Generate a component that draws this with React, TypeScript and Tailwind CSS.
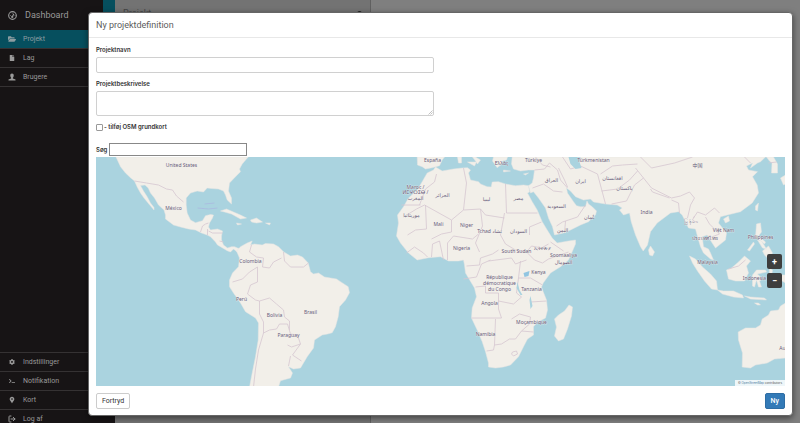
import React from "react";
import { FaFolderOpen, FaFile, FaCog, FaTerminal } from "react-icons/fa";
import { MdLocationPin } from "react-icons/md";
import { FiLogOut } from "react-icons/fi";

type NavItem = { label: string; icon: React.ReactNode; active?: boolean };

const topItems: NavItem[] = [
  { label: "Projekt", icon: <FaFolderOpen />, active: true },
  { label: "Lag", icon: <FaFile className="p-px" /> },
  {
    label: "Brugere",
    icon: (
      <svg viewBox="0 0 16 16" className="h-[8px] w-[8px]" fill="currentColor">
        <path d="M8 1C10.500 1 11.500 2.800 11.500 5C11.500 7 10.800 8.500 9.800 9.500L9.800 11L15 13V15H1V13L6.200 11L6.200 9.500C5.200 8.500 4.500 7 4.500 5C4.500 2.800 5.500 1 8 1Z" />
      </svg>
    ),
  },
];

const bottomItems: NavItem[] = [
  { label: "Indstillinger", icon: <FaCog className="p-px" /> },
  { label: "Notifikation", icon: <FaTerminal className="p-px" /> },
  { label: "Kort", icon: <MdLocationPin /> },
  {
    label: "Log af",
    icon: <FiLogOut className="stroke-3" />,
  },
];

function NavRow({ label, icon, active }: NavItem) {
  return (
    <li className="border-b border-[#353233]">
      <a
        href="#"
        className={
          active
            ? "flex h-[18px] items-center gap-[7px] bg-[#064f5e] pl-2 text-[#8c9da1]"
            : "flex h-[18px] items-center gap-[7px] pl-2 text-[#9a9a9a]"
        }
      >
        <span className="flex w-2 justify-center text-[8px]">{icon}</span>
        <span>{label}</span>
      </a>
    </li>
  );
}

const northAmerica =
  "M115.500 157L120 166.700 125 173 130 177.700 134 181 136.700 187 140 193 143.500 198 148 203.500 153.500 210 153.500 207.500 150 203 146.700 196.700 143 191 140 185.500 144.500 185 147.700 188 150 193 154 198 158 205 163.500 210 165 215 165 219 173 225 180 227 188 229 195 230 201 233 206.700 235 210 236.700 215 242 217 245 220 246.700 226.700 250.700 230 252 233 249 236.700 252 240 255 241 249 237 248 234 246.700 231 246.700 227 248 223 245 221 240 221 236 222 231 217 229 210 230 208 227 209 223 212 218 213 215 210 214.500 205 215.700 202 220.700 195 222.700 190 220 186.700 213 185.700 205 185.700 198 190 193 196.700 191 203 192 206.700 188 211 188.500 218 189 223 191 225 195 226.700 200 231 204 231 198 228 191 229 183 235 176.700 240 171.700 239 169 241.700 164 247.700 157Z";
const southAmerica =
  "M236 251L240 246.700 246.700 243 251.700 241 250 245 254 244 261.700 245 265 243.500 273 244 278 246.700 283 251.700 290 256 297 255 302 257 307.700 263 310 271.700 313 274 318 273 324 277 330 278 336 279 340 281.700 347.700 286.700 349 292.700 345 300 339 306.700 337.700 316.700 335 326.700 331.700 332.700 327 334 321.700 335 314 340 313 348 306.700 356.700 300 368 293 369 288 366.700 292 373 290 378 280 380.700 278 387 249 387 251.700 373 255 356.700 257.700 340 258 323 255 318 245 311.700 240 303 233 293 229 286.700 229 280 232 273 238 266.700 239 258Z";
const africa =
  "M436.700 168L441.700 171 453 169 461.700 168 467 167.700 470 170 468 173 470 180 478 181.700 480 184 486.700 186.700 490.700 187 491.700 182 498 181.700 505 184 515 185.700 523 185 528 185.700 529 192 527 193 531.700 201.700 536.700 210 541.700 221.700 546.700 230 551.700 238 556.700 243 568 241 575 240 575 244 571.700 251.700 568 260 560 266.700 550 273 542.700 283 541 287 542.700 291.700 546 300 547 310 545 318 537 322 533 326.700 533 335 527 339 523 346.700 518 356.700 510 365 503 367 495 368 488 367 488 363 485 351.700 481.700 341.700 476.700 330 471 318 471.700 308 476 296.700 474 288 468 278 465 273 464 265 463 260 458 261 448 261 440 256.700 428 257.700 416.700 260 408 253 400 243 396 236 398 223 397 215 403 206.700 408 198 416.700 190 421.700 181.700 426.700 173 433 170 435 167Z";
const eurasia =
  "M511.700 157L511 164 513 169 520 171 528 170 534 170 533 177.700 531.700 183 528 185.700 530 193 533 191.700 538 198 545 208 548 218 552 226.700 554 235 563 233 570 230 580 225 588 221.700 595 215 596 211 591.700 206.700 588 204 586.500 201 585 206.700 580 206.700 576 205.700 573 201.700 567 193 566 188 570 191 575 196.700 583 200 590 199 593 202 605 204 616.700 205 621.700 208 619 210 623 215 629 213 630.700 221.700 635 235 640 246.700 642.700 251 647 245 650 231.700 656.700 223 665 216.700 670 213 678 211.700 681.700 215 685 221.700 688 228 695 229 698 240 700 246.700 703 253 710 259 713 260 710 253 708 249 703 246.700 701.700 236.700 706.700 235 711.700 243 715 248 725 240 726 233 718 223 720 216.700 726.700 215 740 211.700 751.700 203 758 193 756.700 185 752 176.700 757 171.700 748 170 746 166 752 163 750 168 757 163 760 161.700 765 157Z";
const islands = [
  "M416.700 157L417 165 421.700 166.700 425 169 431.700 167.700 439 165.700 441.700 160 444 157Z",
  "M493 157L492 161 496.700 167.700 500 165 502 161 506 160 507 157Z",
  "M475 157L480 160 477 164 475 161 472 157Z",
  "M467 162L476 162 474 166Z",
  "M457 157L461 157 461 163 458 163Z",
  "M503 170L510 171 503 172Z",
  "M523 174L528 173 525 175Z",
  "M766 157L769 161 771.500 163 771 173 777 173 777 164 773 157Z",
  "M780 178L785 175 785 184 783 185Z",
  "M220 211L226 209 233 212 240 215 246 218 240 219 231 214 224 212Z",
  "M250 220L256 218 262 222 256 223 251 222Z",
  "M236 223L241 224 237 225Z",
  "M265 223L270 223 269 225Z",
  "M568.500 305L572 307 571 316 567 329 563 339 558 341 554 336 556 327 554 319 558 315 564 311Z",
  "M650 246L654 252 652 256 649 255 648 250Z",
  "M755 206L758 203 757 211 755 210Z",
  "M723 219L728 216 729 221 725 223Z",
  "M689 256L695 259 702 267 710 274 716 281 717 290 711 289 704 281 697 271 692 263Z",
  "M717 290L723 291 733 291 742 295 743 298 733 297 722 294Z",
  "M744 296L750 297 764 298 766 300 750 299Z",
  "M754 303L758 303 760 305 757 305Z",
  "M726 270L731 268 738 262 744 256 750 261 746 266 748 273 744 281 735 281 728 279Z",
  "M756 224L760 223 761 232 758 236 765 242 764 244 755 237Z",
  "M762 251L768 246 772 253 768 259 764 255Z",
  "M747 250L753 242 754 244 749 251Z",
  "M757 240L761 241 766 249 762 248Z",
  "M752 275L756 270 765 270 766 272 757 274 762 279 759 281 761 287 758 287 756 280 754 287 752 286Z",
  "M769 268L772 270 771 277 769 273Z",
  "M776 275L785 275 785 283 780 280Z",
  "M785 303L780 306 778 310 770 311 768 315 761.700 319 760 325 755 328 745 328 737.700 332 738 340 742 353 741.700 367 750 368 755 365 766.700 363 774 359 785 358Z",
];
const borders =
  "M134 181L146 183 158 185 166 189 172 190 176 196 183 202M200 232L202 226 205 224 208 223M208 231L212 233 222 233M207 229L207 235M219 241L223 242M251 245L249 252 256 257 263 258 262 267M262 267L269 268 273 262 281 258M283 252L284 261 290 267 303 267 308 263M257 267L257 282 250 285 247 294 255 300 259 301M232 282L242 279 249 272 257 267M259 301L269 298 276 304 283 310 284 317 289 321 289 330M259 301L259 314 263 322 263 333 258 350 255 369 253 387M263 333L269 330 276 329 279 324 287 324 290 334 297 335 300 344 291 347 287 345M300 344L292 355 301 361M290 356L288 366M401 205L420 205M403 217L416 209 424 205 451 220 463 210 466 183 463 168M425 205L426 229 415 230 407 235M436 174L434 182 425 189 419 205M451 220L451 232 441 234 431 239M480 209L485 215 504 218M463 210L480 209 482 226 475 243 479 252M505 184L506 213 537 213M504 213L500 235 505 244 515 250 526 252M447 260L447 243 453 236 472 239 478 234M406 253L414 247 423 253 427 257M431 257L432 244 439 241 443 260M466 266L479 265 480 258 492 254 498 250M488 261L511 258 515 264 526 260M463 279L476 277 481 264 490 260M475 287L485 286 485 293 498 293 498 309 501 318 471 318M498 301L513 304 521 297 516 293 518 278 520 261M526 252L534 260 542 263 548 259 568 252M518 278L530 278 542 285M530 302L546 301M495 319L494 345 501 344 509 339 515 339 521 331 533 332M494 345L493 350 486 351M511 319L519 314 530 317 529 324 521 331M512 352L516 351 517 354 513 356 511 354ZM534 170L544 169 549 163 557 170 560 180 567 188M532 188L543 184 553 191 562 192M529 235L529 227 541 222M526 252L531 246 541 248 548 244M550 242L563 251M556 226L562 222 577 217 585 205M558 168L564 180 567 187M562 157L570 169 580 166 597 174 601 189 605 204M600 174L612 166 622 165 637 164M601 191L617 189 629 180 637 171M611 204L626 201 634 185 643 178 635 168M640 157L651 168 674 163 692 157M643 178L651 188 671 198 680 196 689 192 694 198 690 205 687 218M671 200L678 203 679 213M693 218L697 212 705 215 714 208 719 213M694 216L692 220 695 222M705 217L709 224 719 234 711 237M650 189L652 192 669 198M728 269L738 266 745 260M744 157L750 163M768 163L776 162M565 221L564 233M535 157L542 165 550 167";

type MapLabel = [number, number, string];
const labels: MapLabel[] = [
  [181, 167, "United States"], [173, 210, "México"], [250, 263, "Colombia"], [241, 301, "Perú"],
  [274, 317, "Bolivia"], [310, 314, "Brasil"], [288, 337, "Paraguay"],
  [432, 162, "España"], [501, 165, "Ελλάς"], [533, 162, "Türkiye"], [593, 162, "Türkmenistan"],
  [415, 189, "Maroc /"], [415, 194, "ⵍⵎⵖⵔⵉⴱ /"], [415, 200, "المغرب"], [442, 197, "الجزائر"],
  [486, 201, "ليبيا"], [518, 200, "مصر"], [551, 182, "العراق"], [556, 208, "السعودية"],
  [562, 232, "اليمن"], [580, 183, "ایران"], [612, 180, "افغانستان"], [624, 190, "پاکستان"], [589, 219, "عُمان"],
  [411, 217, "موريتانيا"], [438, 226, "Mali"], [466, 227, "Niger"], [489, 233, "Tchad تشاد"],
  [518, 233, "السودان"], [461, 250, "Nigeria"], [516, 253, "South Sudan"], [542, 250, "ኢትዮጵያ"],
  [563, 257, "Soomaaliya"], [563, 264, "الصومال"], [538, 274, "Kenya"], [499, 279, "République"],
  [499, 285, "démocratique"], [499, 291, "du Congo"], [531, 291, "Tanzania"], [489, 305, "Angola"],
  [531, 324, "Moçambique"], [485, 336, "Namibia"], [646, 214, "India"], [697, 167, "中国"],
  [690, 223, "မြန်မာ"], [723, 232, "Việt Nam"], [704, 240, "ประเทศไทย"], [707, 264, "Malaysia"],
  [760, 239, "Philippines"], [754, 280, "Indonesia"], [782, 350, "Au"],
];

function WorldMap() {
  return (
    <svg
      viewBox="95 157 690 229"
      preserveAspectRatio="xMidYMid slice"
      className="block h-[229px] w-full bg-[#aad3df]"
      role="img"
      aria-label="Kort"
    >
      <g fill="#f2efe9" stroke="#e6e4e2" strokeWidth="0.5" strokeLinejoin="round">
        <path d={northAmerica} />
        <path d={southAmerica} />
        <path d={africa} />
        <path d={eurasia} />
        {islands.map((d) => (
          <path key={d} d={d} />
        ))}
      </g>
      <path d={borders} fill="none" stroke="#d6c6d0" strokeWidth="0.8" strokeLinejoin="round" />
      <g fill="#aad3df">
        <path d="M568 157L580 157 579 162 581 168 575 169 570 164Z" />
        <path d="M523 273L529 271 528 276 524 277Z" fill="#91c5e1" />
        <path d="M517 282L519 290 522 295 520 295 516 288ZM530 296L532 306 530 309 529 300Z" />
      </g>
      <path d="M204 204L214 203M197 208L208 209 217 208" stroke="#a9b9df" strokeWidth="0.8" fill="none" />
      <g
        className="font-['Noto_Sans','DejaVu_Sans','Noto_Sans_CJK_SC',sans-serif] text-[5px]"
        fill="#665a78"
        stroke="#f5f3ef"
        strokeWidth="0.4"
        paintOrder="stroke"
        textAnchor="middle"
      >
        {labels.map(([x, y, text]) => (
          <text key={text} x={x} y={y}>
            {text}
          </text>
        ))}
      </g>
    </svg>
  );
}

const fieldLabel = "font-['Inter','Liberation_Sans',sans-serif] text-[6px] leading-[8px] font-semibold";
const zoomButton = "flex h-[15px] w-[15px] items-center justify-center rounded-[2px] bg-[#3e3e3e]";

export default function App() {
  return (
    <div className="relative flex h-screen overflow-hidden bg-[#7f7f7f] font-['Roboto','Liberation_Sans',sans-serif] text-[7px] leading-[8px] text-[#333]">
      <aside className="flex w-[115px] shrink-0 flex-col overflow-hidden bg-[#171415]">
        <div className="flex h-[30px] shrink-0">
          <div className="flex grow items-center gap-2 pl-2 text-[9px] text-[#999]">
            <svg viewBox="0 0 16 16" className="h-[9px] w-[9px]" fill="none" stroke="currentColor" strokeWidth="2">
              <circle cx="8" cy="8" r="6.800" />
              <path d="M7.500 10.500L10.500 5M4 8h1M7 4h1M12 8h1" />
              <circle cx="7.500" cy="10.500" r="1" />
            </svg>
            <span>Dashboard</span>
          </div>
          <div className="w-3 bg-[#064f5e]" />
        </div>
        <ul className="shrink-0">
          {topItems.map((item) => (
            <NavRow key={item.label} {...item} />
          ))}
        </ul>
        <ul className="mt-auto h-[71px] shrink-0 border-t border-[#353233]">
          {bottomItems.map((item) => (
            <NavRow key={item.label} {...item} />
          ))}
        </ul>
      </aside>
      <section className="flex w-64 shrink-0 items-start justify-between border-r border-[#606060] bg-[#737373] px-2 pt-[9px] text-[9px] text-[#444]">
        <h1>Projekt</h1>
        <span className="mt-[2px] h-[5px] w-[5px] rounded-full bg-[#222]" />
      </section>

      <div
        role="dialog"
        aria-labelledby="dialog-title"
        className="absolute top-3 right-[7px] left-[88px] rounded-[4px] border border-[#666] bg-white shadow-[0_2px_6px_rgba(0,0,0,0.5)]"
      >
        <header className="border-b border-[#e8e8e8] px-[7px] py-[6px]">
          <h2 id="dialog-title" className="text-[9px] leading-[12px] text-[#5c5c5c]">
            Ny projektdefinition
          </h2>
        </header>
        <form onSubmit={(e) => e.preventDefault()}>
          <div className="px-[7px] pt-2">
            <label htmlFor="name" className={`block ${fieldLabel}`}>
              Projektnavn
            </label>
            <input
              id="name"
              className="mt-[3px] block h-4 w-[49%] rounded-[2px] border border-[#d0d0d0] px-1 outline-none"
            />
            <label htmlFor="description" className={`mt-[7px] block ${fieldLabel}`}>
              Projektbeskrivelse
            </label>
            <div className="relative mt-[3px] w-[49%]">
              <textarea
                id="description"
                className="block h-[25px] w-full resize-none rounded-[2px] border border-[#d0d0d0] px-1 outline-none"
              />
              <svg viewBox="0 0 5 5" className="absolute right-px bottom-px h-[5px] w-[5px]" stroke="#999" strokeWidth="0.6">
                <path d="M0.500 4.500L4.500 0.500M2.500 4.500L4.500 2.500" />
              </svg>
            </div>
            <label className={`mt-[7px] flex items-center gap-px ${fieldLabel}`}>
              <input
                type="checkbox"
                className="h-[7px] w-[7px] appearance-none rounded-[1px] border border-[#999] bg-white checked:bg-[#337ab7]"
              />
              <span>- tilføj OSM grundkort</span>
            </label>
            <div className="mt-3 flex items-center gap-[2px]">
              <label htmlFor="search" className={fieldLabel}>
                Søg
              </label>
              <input id="search" className="h-[13px] w-[138px] border border-[#888] px-1 outline-none" />
            </div>
            <div className="relative mt-px">
              <WorldMap />
              <div className="absolute right-[3px] bottom-[98px] flex flex-col gap-1 text-[9px] font-bold text-white">
                <button type="button" aria-label="Zoom ind" className={zoomButton}>
                  +
                </button>
                <button type="button" aria-label="Zoom ud" className={zoomButton}>
                  −
                </button>
              </div>
              <div className="absolute right-0 bottom-0 bg-white/80 px-[3px] font-['Inter','Liberation_Sans',sans-serif] text-[3px] leading-[6px] text-[#555]">
                ©{" "}
                <a href="#" className="text-[#4f7f9f]">
                  OpenStreetMap
                </a>{" "}
                contributors
              </div>
            </div>
          </div>
          <footer className="flex justify-between px-[7px] pt-[7px] pb-[6px]">
            <button type="button" className="h-4 rounded-[2px] border border-[#ccc] px-[5px]">
              Fortryd
            </button>
            <button
              type="submit"
              className="h-4 rounded-[2px] border border-[#2e6da4] bg-[#337ab7] px-[5px] font-medium text-white"
            >
              Ny
            </button>
          </footer>
        </form>
      </div>
    </div>
  );
}
